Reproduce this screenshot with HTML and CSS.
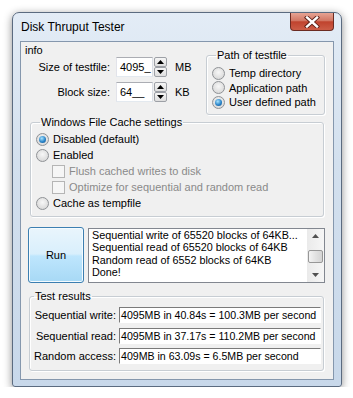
FILE: index.html
```html
<!DOCTYPE html>
<html lang="en">
<head>
    <meta charset="UTF-8">
    <title>Disk Thruput Tester</title>
    <link rel="stylesheet" href="styles.css">
</head>
<body>
    <div class="window">
        <!-- Title bar -->
        <div class="titlebar">
            <span class="title">Disk Thruput Tester</span>
            <button class="close" type="button">
                <svg width="16" height="12" viewBox="0 0 16 12">
                    <path d="M3 1.5 L13 10.5 M13 1.5 L3 10.5" stroke="#5a1f16" stroke-width="4.2" stroke-linecap="square"/>
                    <path d="M3 1.5 L13 10.5 M13 1.5 L3 10.5" stroke="#fff" stroke-width="2.4" stroke-linecap="square"/>
                </svg>
            </button>
        </div>

        <div class="client">
            <div class="top">
                <!-- Sizes -->
                <div class="sizes">
                    <div class="info">info</div>
                    <div class="spin-row">
                        <label class="spin-label">Size of testfile:</label>
                        <div class="edit">4095_</div>
                        <div class="spin">
                            <span class="spin-btn"><svg width="7" height="4" viewBox="0 0 7 4"><polygon points="0,4 3.5,0 7,4" fill="#000"/></svg></span>
                            <span class="spin-btn"><svg width="7" height="4" viewBox="0 0 7 4"><polygon points="0,0 3.5,4 7,0" fill="#000"/></svg></span>
                        </div>
                        <span class="unit">MB</span>
                    </div>
                    <div class="spin-row">
                        <label class="spin-label">Block size:</label>
                        <div class="edit">64__</div>
                        <div class="spin">
                            <span class="spin-btn"><svg width="7" height="4" viewBox="0 0 7 4"><polygon points="0,4 3.5,0 7,4" fill="#000"/></svg></span>
                            <span class="spin-btn"><svg width="7" height="4" viewBox="0 0 7 4"><polygon points="0,0 3.5,4 7,0" fill="#000"/></svg></span>
                        </div>
                        <span class="unit">KB</span>
                    </div>
                </div>

                <!-- Path of testfile -->
                <fieldset class="group path">
                    <legend>Path of testfile</legend>
                    <div class="opt"><span class="radio"></span>Temp directory</div>
                    <div class="opt"><span class="radio"></span>Application path</div>
                    <div class="opt"><span class="radio checked"></span>User defined path</div>
                </fieldset>
            </div>

            <!-- Cache settings -->
            <fieldset class="group cache">
                <legend>Windows File Cache settings</legend>
                <div class="opt"><span class="radio checked"></span>Disabled (default)</div>
                <div class="opt"><span class="radio"></span>Enabled</div>
                <div class="opt sub disabled"><span class="check"></span>Flush cached writes to disk</div>
                <div class="opt sub disabled"><span class="check"></span>Optimize for sequential and random read</div>
                <div class="opt"><span class="radio"></span>Cache as tempfile</div>
            </fieldset>

            <!-- Run + log -->
            <div class="run-row">
                <button class="run" type="button">Run</button>
                <div class="log">
                    <div class="log-text">
                        <div>Sequential write of 65520 blocks of 64KB...</div>
                        <div>Sequential read of 65520 blocks of 64KB</div>
                        <div>Random read of 6552 blocks of 64KB</div>
                        <div>Done!</div>
                    </div>
                    <div class="vscroll">
                        <span class="arrow"><svg width="7" height="4" viewBox="0 0 7 4"><polygon points="0,4 3.5,0 7,4" fill="#505050"/></svg></span>
                        <span class="thumb"></span>
                        <span class="arrow"><svg width="7" height="4" viewBox="0 0 7 4"><polygon points="0,0 3.5,4 7,0" fill="#505050"/></svg></span>
                    </div>
                </div>
            </div>

            <!-- Results -->
            <fieldset class="group results">
                <legend>Test results</legend>
                <div class="res-row">
                    <span class="res-label">Sequential write:</span>
                    <div class="res-box">4095MB in 40.84s = 100.3MB per second</div>
                </div>
                <div class="res-row">
                    <span class="res-label">Sequential read:</span>
                    <div class="res-box">4095MB in 37.17s = 110.2MB per second</div>
                </div>
                <div class="res-row">
                    <span class="res-label">Random access:</span>
                    <div class="res-box">409MB in 63.09s = 6.5MB per second</div>
                </div>
            </fieldset>
        </div>
    </div>
</body>
</html>
```

FILE: styles.css
```css
/* General */
body {
    margin: 0;
    background: #fff;
    font-family: "Liberation Sans", Arial, sans-serif;
    font-size: 11px;
    color: #000;
}

.window {
    box-sizing: border-box;
    width: 330px;
    height: 375px;
    margin: 12px 0 0 12px;
    padding: 0 7px 6px;
    display: flex;
    flex-direction: column;
    border: 1px solid #5b6b80;
    border-radius: 7px 7px 3px 3px;
    background: linear-gradient(#e3ecf6, #d3e0ee 40%, #c8d8ea);
    box-shadow: 0 2px 9px rgba(0, 0, 0, 0.45);
}

/* Title bar */
.titlebar {
    height: 28px;
    display: flex;
    align-items: center;
    justify-content: space-between;
}

.title {
    padding-left: 1px;
    font-size: 12px;
    color: #000;
}

.close {
    align-self: flex-start;
    width: 44px;
    height: 18px;
    padding: 0;
    display: flex;
    align-items: center;
    justify-content: center;
    border: 1px solid #6b2b22;
    border-top: none;
    border-radius: 0 0 4px 4px;
    background: linear-gradient(#e6a393, #d27764 45%, #c0432e 52%, #cc5d47);
}

/* Client area */
.client {
    flex: 1;
    border: 1px solid #8597ad;
    background: #f0f0f0;
}

.top {
    display: flex;
    height: 73px;
}

.sizes {
    width: 185px;
}

.info {
    margin: 2px 0 0 4px;
    line-height: 13px;
}

.spin-row {
    display: flex;
    align-items: center;
    height: 20px;
    margin-bottom: 5px;
}

.spin-label {
    width: 89px;
    text-align: right;
}

.edit {
    box-sizing: border-box;
    width: 37px;
    height: 20px;
    margin-left: 6px;
    padding: 3px 0 0 3px;
    border: 1px solid #abadb3;
    border-color: #abadb3 #dbdfe6 #e3e9ef #e2e3ea;
    background: #fff;
    line-height: 13px;
}

.spin {
    width: 13px;
    height: 20px;
    margin-left: 1px;
    display: flex;
    flex-direction: column;
}

.spin-btn {
    box-sizing: border-box;
    flex: 1;
    display: flex;
    align-items: center;
    justify-content: center;
    border: 1px solid #9da0a6;
    border-radius: 2px;
    background: linear-gradient(#f6f6f6, #dedede);
}

.unit {
    margin-left: 8px;
}

/* Group boxes */
.group {
    margin: 0;
    padding: 0;
    border: 1px solid #c7cdd3;
    border-radius: 3px;
    box-shadow: inset 1px 1px 0 #fff, 1px 1px 0 #fff;
}

.group legend {
    margin-left: 4px;
    padding: 0 1px;
    line-height: 13px;
}

.opt {
    display: flex;
    align-items: center;
    white-space: nowrap;
}

.radio {
    box-sizing: border-box;
    width: 13px;
    height: 13px;
    margin-right: 4px;
    display: flex;
    align-items: center;
    justify-content: center;
    border: 1px solid #8f9296;
    border-radius: 50%;
    background: radial-gradient(circle at 50% 40%, #f7f7f7, #dcdcdc 70%, #cfcfcf);
}

.radio.checked::after {
    content: "";
    width: 7px;
    height: 7px;
    border-radius: 50%;
    background: radial-gradient(circle at 40% 35%, #a8e4ff, #2a84c9 55%, #0e4c85);
}

.check {
    box-sizing: border-box;
    width: 13px;
    height: 13px;
    margin-right: 4px;
    border: 1px solid #b5b5b5;
    background: #f6f6f6;
}

.disabled {
    color: #8a8a8a;
}

.path {
    width: 119px;
    height: 66.5px;
    box-sizing: border-box;
    margin-top: 6.5px;
    padding: 4.25px 0 0 5px;
}

.path .opt {
    height: 14.5px;
}

.cache {
    box-sizing: border-box;
    width: 294px;
    height: 101.5px;
    margin: 0.5px 0 0 9px;
    padding: 2.5px 0 0 5px;
}

.cache .opt {
    height: 16px;
}

.cache .sub {
    padding-left: 16px;
}

/* Run row */
.run-row {
    display: flex;
    align-items: flex-start;
    margin: 10px 0 0 7px;
    height: 56px;
}

.run {
    box-sizing: border-box;
    width: 56px;
    height: 56px;
    padding: 0;
    border: 1px solid #3c7fb1;
    border-radius: 3px;
    background: linear-gradient(#e9f5fc, #d9effc 48%, #bee6fd 52%, #a7d9f5);
    box-shadow: inset 0 0 0 1px #f4fbff;
    font-family: inherit;
    font-size: 11px;
    color: #000;
}

.log {
    box-sizing: border-box;
    width: 237px;
    height: 55px;
    margin: 1px 0 0 4px;
    display: flex;
    border: 1px solid #828790;
    background: #fff;
}

.log-text {
    flex: 1;
    padding: 0 0 0 3px;
    font-size: 10.8px;
    line-height: 12.4px;
    white-space: nowrap;
}

.vscroll {
    width: 17px;
    display: flex;
    flex-direction: column;
    align-items: center;
    background: linear-gradient(90deg, #eaeaea, #f6f6f6);
}

.vscroll .arrow {
    height: 15px;
    display: flex;
    align-items: center;
}

.vscroll .thumb {
    box-sizing: border-box;
    width: 15px;
    height: 14px;
    margin: 6px 0 4px;
    border: 1px solid #979797;
    border-radius: 2px;
    background: linear-gradient(90deg, #f3f3f3, #e2e2e2 50%, #d4d4d4);
}

/* Results */
.results {
    box-sizing: border-box;
    width: 295px;
    height: 81px;
    margin: 6.5px 0 0 8px;
    padding: 4.5px 0 0 0;
}

.res-row {
    display: flex;
    align-items: center;
    height: 16px;
    margin-bottom: 4.5px;
}

.res-label {
    width: 86px;
    text-align: right;
}

.res-box {
    box-sizing: border-box;
    width: 202px;
    height: 16px;
    margin-left: 3px;
    padding-left: 1px;
    border: 1px solid;
    border-color: #7a7a7a #fff #fff #7a7a7a;
    background: #fff;
    font-size: 10.6px;
    line-height: 14px;
    white-space: nowrap;
}
```
